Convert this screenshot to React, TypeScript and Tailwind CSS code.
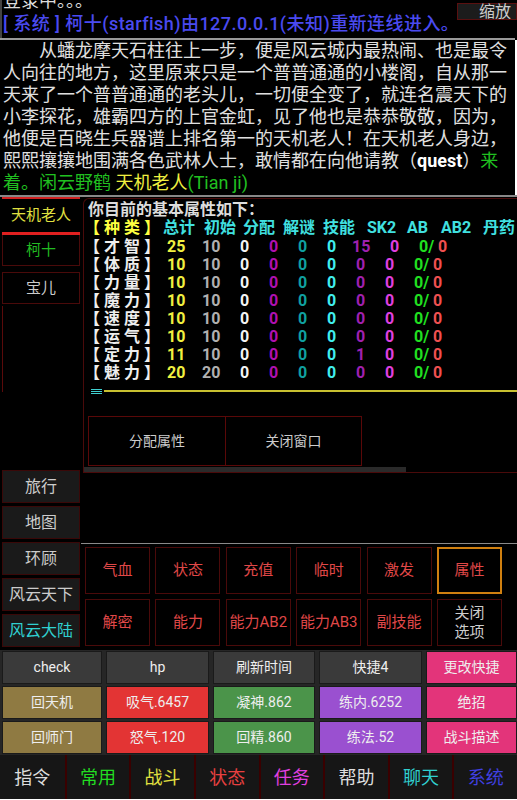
import React from "react";

const rows = [
  { label: "【 才 智 】", total: "25", init: "10", sk: "15", wide: true },
  { label: "【 体 质 】", total: "10", init: "10", sk: "0", wide: false },
  { label: "【 力 量 】", total: "10", init: "10", sk: "0", wide: false },
  { label: "【 魔 力 】", total: "10", init: "10", sk: "0", wide: false },
  { label: "【 速 度 】", total: "10", init: "10", sk: "0", wide: false },
  { label: "【 运 气 】", total: "10", init: "10", sk: "0", wide: false },
  { label: "【 定 力 】", total: "11", init: "10", sk: "1", wide: false },
  { label: "【 魅 力 】", total: "20", init: "20", sk: "0", wide: false },
];

const headers = ["总计", "初始", "分配", "解谜", "技能", "SK2", "AB", "AB2", "丹药"];

const options = [
  { text: "气血" },
  { text: "状态" },
  { text: "充值" },
  { text: "临时" },
  { text: "激发" },
  { text: "属性", active: true },
  { text: "解密" },
  { text: "能力" },
  { text: "能力AB2" },
  { text: "能力AB3" },
  { text: "副技能" },
];

const quick = [
  { text: "check", bg: "bg-[#3a3a3a]" },
  { text: "hp", bg: "bg-[#3a3a3a]" },
  { text: "刷新时间", bg: "bg-[#3a3a3a]" },
  { text: "快捷4", bg: "bg-[#3a3a3a]" },
  { text: "更改快捷", bg: "bg-[#e3347a]" },
  { text: "回天机", bg: "bg-[#8f7a42]" },
  { text: "吸气.6457", bg: "bg-[#e33434]" },
  { text: "凝神.862", bg: "bg-[#4b944a]" },
  { text: "练内.6252", bg: "bg-[#9a50d0]" },
  { text: "绝招", bg: "bg-[#e3347a]" },
  { text: "回师门", bg: "bg-[#8f7a42]" },
  { text: "怒气.120", bg: "bg-[#e33434]" },
  { text: "回精.860", bg: "bg-[#4b944a]" },
  { text: "练法.52", bg: "bg-[#9a50d0]" },
  { text: "战斗描述", bg: "bg-[#e3347a]" },
];

const tabs = [
  { text: "指令", color: "text-[#dddddd]" },
  { text: "常用", color: "text-[#22dd22]" },
  { text: "战斗", color: "text-[#e0e040]" },
  { text: "状态", color: "text-[#e84040]" },
  { text: "任务", color: "text-[#e040e0]" },
  { text: "帮助", color: "text-[#dddddd]" },
  { text: "聊天", color: "text-[#30d0d0]" },
  { text: "系统", color: "text-[#4040e0]" },
];

const sideButtons = [
  { text: "旅行", color: "text-[#cccccc]" },
  { text: "地图", color: "text-[#cccccc]" },
  { text: "环顾", color: "text-[#cccccc]" },
  { text: "风云天下", color: "text-[#cccccc]" },
  { text: "风云大陆", color: "text-[#30d0d0]" },
];

export default function App() {
  return (
    <div className="w-[517px] bg-black font-[Roboto,'Noto_Sans_CJK_SC',sans-serif] text-[#dddddd] overflow-hidden">
      {/* message log */}
      <div className="relative h-[38px] border-l-2 border-[#444444] overflow-hidden">
        <div className="-mt-[10px] pl-[1px] text-[18px] leading-[22px] whitespace-nowrap">登录中。。。</div>
        <div className="pl-[1px] text-[18px] leading-[23px] font-medium tracking-[0.45px] text-[#4a4af0] whitespace-nowrap">
          [ 系统 ] 柯十(starfish)由127.0.0.1(未知)重新连线进入。
        </div>
        <div className="absolute right-0 top-[3px] w-[60px] h-[17px] bg-[#1c1c1c] border border-[#5a1010] text-[16px] leading-[15px] text-[#cccccc] text-right pr-[5px]">
          缩放
        </div>
      </div>
      <div className="h-[2px] w-[515px] bg-[#999999]" />
      <div className="pl-[3px] h-[155px] border-r-2 border-white text-[18px] leading-[22px] whitespace-nowrap text-[#e0e0e0]">
        <div>　　从蟠龙摩天石柱往上一步，便是风云城内最热闹、也是最令</div>
        <div>人向往的地方，这里原来只是一个普普通通的小楼阁，自从那一</div>
        <div>天来了一个普普通通的老头儿，一切便全变了，就连名震天下的</div>
        <div>小李探花，雄霸四方的上官金虹，见了他也是恭恭敬敬，因为，</div>
        <div>他便是百晓生兵器谱上排名第一的天机老人！在天机老人身边，</div>
        <div>
          熙熙攘攘地围满各色武林人士，敢情都在向他请教（<span className="font-bold text-white">quest</span>）
          <span className="text-[#20c020]">来</span>
        </div>
        <div className="text-[#20c020]">
          着。闲云野鹤 <span className="text-[#f0f040]">天机老人</span>(Tian ji)
        </div>
      </div>
      <div className="h-[2px] bg-[#888888]" />

      {/* middle */}
      <div className="flex">
        {/* sidebar */}
        <div className="w-[81px] pl-[2px] flex flex-col">
          <div className="w-[78px] h-[38px] border-t-2 border-b-[3px] border-t-[#d02020] border-b-[#e02020] flex items-center justify-center text-[15px] text-[#e0e040]">
            天机老人
          </div>
          <div className="w-[78px] h-[31px] border border-t-0 border-[#4a0a0a] flex items-center justify-center text-[15px] text-[#22bb22]">
            柯十
          </div>
          <div className="mt-[6px] w-[78px] h-[32px] border border-[#4a0a0a] flex items-center justify-center text-[15px] text-[#cccccc]">
            宝儿
          </div>
          <div className="mt-[2px] h-[86px] w-[1px] bg-[#5a0a0a]" />
          <div className="mt-[78px] flex flex-col gap-[3px]">
            {sideButtons.map((b) => (
              <div
                key={b.text}
                className={`w-[78px] h-[33px] bg-[#1a1a1a] border border-[#3a0808] flex items-center justify-center text-[16px] ${b.color}`}
              >
                {b.text}
              </div>
            ))}
          </div>
        </div>

        {/* right column */}
        <div className="flex-1 flex flex-col">
          <div className="ml-[2px] mt-[1px] h-[275px] border border-r-0 border-[#4a0a0a] rounded-tl-[6px] pt-[2px] flex flex-col">
            <div className="pl-[4px] text-[16px] leading-[18px] font-bold text-[#dddddd] whitespace-nowrap">你目前的基本属性如下：</div>
            <div className="grid grid-cols-[79px_41px_39px_40px_40px_44px_40px_34px_42px_1fr] h-[18px] mb-[1px] text-[16px] leading-[18px] font-bold whitespace-nowrap">
              <span className="text-[#ffff40]">【 种 类 】</span>
              {headers.map((h) => (
                <span key={h} className="text-[#40e0e0]">
                  {h}
                </span>
              ))}
            </div>
            {rows.map((r) => (
              <div
                key={r.label}
                className="grid grid-cols-[83px_35px_38px_29px_29px_29px_29px_29px_29px_1fr] h-[18px] text-[16px] leading-[18px] font-bold whitespace-nowrap"
              >
                <span className="text-[#eeeeee]">{r.label}</span>
                <span className="text-[#f0f040]">{r.total}</span>
                <span className="text-[#b0b0b0]">{r.init}</span>
                <span className="text-[#f4f4f4]">0</span>
                <span className="text-[#b010b0]">0</span>
                <span className="text-[#10a0a0]">0</span>
                <span className="text-[#40eeee]">0</span>
                <span className={`text-[#a020b0] ${r.wide ? "-ml-[4px]" : ""}`}>{r.sk}</span>
                <span className={`text-[#e040e0] ${r.wide ? "pl-[5px]" : ""}`}>0</span>
                <span className={r.wide ? "pl-[5px]" : ""}>
                  <span className="text-[#20e020]">0/</span> <span className="text-[#f05050]">0</span>
                </span>
              </div>
            ))}
            <div className="mt-[8px] flex items-center h-[2px]">
              <div className="ml-[7px] w-[11px] h-[5px] border-y border-[#40d0d0] flex flex-col justify-center">
                <div className="h-[1px] bg-[#40d0d0]" />
              </div>
              <div className="ml-[2px] flex-1 h-[2px] bg-[#c8c030]" />
            </div>
            <div className="mt-[24px] ml-[4px] flex">
              <div className="w-[138px] h-[50px] border border-[#5a0808] flex items-center justify-center text-[14px] text-[#cccccc]">
                分配属性
              </div>
              <div className="w-[136px] h-[50px] border border-l-0 border-[#5a0808] flex items-center justify-center text-[14px] text-[#cccccc]">
                关闭窗口
              </div>
            </div>
            <div className="mt-[1px] w-[322px] h-[5px] bg-[#2a2a2a]" />
          </div>
          <div className="mt-[70px] h-[1px] bg-[#8a8a8a]" />
          <div className="mt-[3px] pl-[4px] grid grid-cols-[repeat(6,65px)] gap-x-[5.4px] gap-y-[5px]">
            {options.map((o) => (
              <div
                key={o.text}
                className={`h-[47px] flex items-center justify-center text-[15px] ${
                  o.active ? "border-2 border-[#d08010]" : "border border-[#4a0a0a]"
                } text-[#e04848] whitespace-nowrap`}
              >
                {o.text}
              </div>
            ))}
            <div className="h-[47px] border border-[#4a0a0a] flex flex-col items-center justify-center text-[15px] leading-[19px] text-[#cccccc]">
              <span>关闭</span>
              <span>选项</span>
            </div>
          </div>
        </div>
      </div>

      {/* quick buttons */}
      <div className="mt-[3px] pl-[2px] bg-[#262626] grid grid-cols-[100px_103px_102px_103px_1fr] gap-x-[4px] gap-y-[2px] py-[1px]">
        {quick.map((q) => (
          <div
            key={q.text}
            className={`h-[33px] ${q.bg} border border-[#1a1a1a] flex items-center justify-center text-[14px] text-[#eeeeee] whitespace-nowrap`}
          >
            {q.text}
          </div>
        ))}
      </div>

      {/* bottom tabs */}
      <div className="h-[44px] bg-[#161616] grid grid-cols-8">
        {tabs.map((t, i) => (
          <div
            key={t.text}
            className={`flex items-center justify-center text-[18px] ${t.color} ${
              i > 0 ? "border-l-2 border-[#3a0000]" : ""
            }`}
          >
            {t.text}
          </div>
        ))}
      </div>
    </div>
  );
}
